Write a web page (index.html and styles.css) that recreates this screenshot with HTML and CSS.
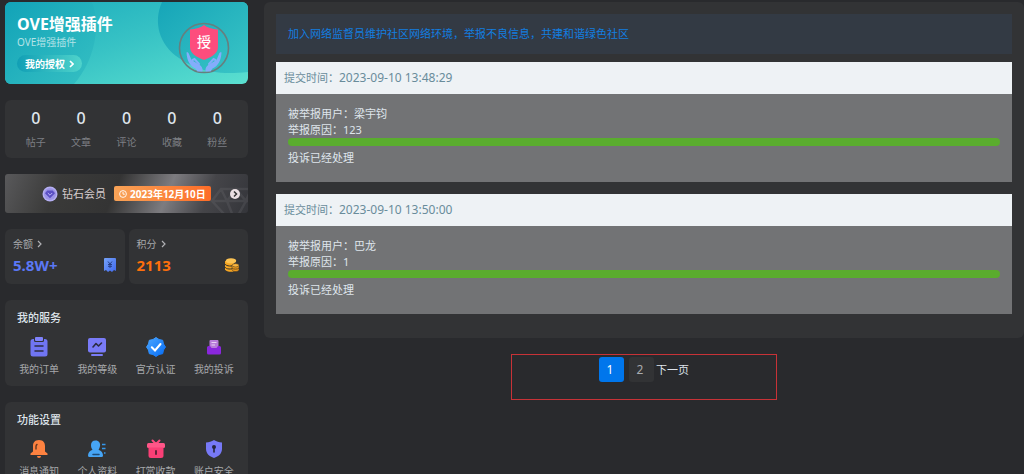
FILE: index.html
```html
<!DOCTYPE html>
<html lang="zh-CN">
<head>
  <meta charset="UTF-8" />
  <meta name="viewport" content="width=device-width,initial-scale=1" />
  <title>我的投诉</title>
  <link rel="stylesheet" href="styles.css">
</head>

<body>
  <div class="page">
    <aside class="sidebar">
      <!-- Plugin banner -->
      <section class="plugin">
        <svg class="plugin-bg" viewBox="0 0 243 82" preserveAspectRatio="none" aria-hidden="true">
          <defs>
            <linearGradient id="bgA" x1="0" y1="0" x2="1" y2="1">
              <stop offset="0" stop-color="#12a3b8"/><stop offset="1" stop-color="#36c0c3"/>
            </linearGradient>
            <linearGradient id="bgB" x1="0" y1="0" x2="1" y2="1">
              <stop offset="0" stop-color="#16a5b8"/><stop offset="1" stop-color="#3ac5c6"/>
            </linearGradient>
            <linearGradient id="bgC" x1="0" y1="0" x2="1" y2="1">
              <stop offset="0" stop-color="#1aabbc"/><stop offset=".5" stop-color="#38c3c5"/><stop offset="1" stop-color="#5be0d0"/>
            </linearGradient>
          </defs>
          <rect width="243" height="82" fill="url(#bgC)"/>
          <path d="M0 0H87C96 24 90 58 69 82H0Z" fill="url(#bgA)"/>
          <path d="M157 0H243V70C206 74 188 66 174 56C154 43 148 20 157 0Z" fill="url(#bgB)"/>
        </svg>
        <div class="plugin-text">
          <h1>OVE增强插件</h1>
          <p>OVE增强插件</p>
          <a class="plugin-btn" href="#">我的授权
            <svg width="5" height="8" viewBox="0 0 5 8"><path d="M1 1l3 3-3 3" fill="none" stroke="#fff" stroke-width="1.6"/></svg>
          </a>
        </div>
        <div class="emblem">
          <svg width="52" height="52" viewBox="0 0 52 52" aria-hidden="true">
            <circle cx="26" cy="26" r="24.5" fill="none" stroke="#667f7f" stroke-width="1.6"/>
            <path d="M26 3C29 5.500 34 7 40 7.500V25C40 31 34 35 26 38C18 35 12 31 12 25V7.500C18 7 23 5.500 26 3Z" fill="#fd4d7d"/>
            <path d="M8.500 30.500C9.500 30 10.500 30.500 11 32L13.500 38L21 42.500C23.500 44 25 46 24.500 49.500H19.500L17.500 46.500C12 44 9 39 8.500 30.500Z" fill="#84adfb"/>
            <path d="M43.500 30.500C42.500 30 41.500 30.500 41 32L38.500 38L31 42.500C28.500 44 27 46 27.500 49.500H32.500L34.500 46.500C40 44 43 39 43.500 30.500Z" fill="#84adfb"/>
            <path d="M14.500 38L16.500 37L21 42M37.500 38L35.500 37L31 42" fill="none" stroke="#84adfb" stroke-width="2" stroke-linecap="round"/>
          </svg>
          <span>授</span>
        </div>
      </section>

      <section class="card stats">
        <div><b>0</b><span>帖子</span></div>
        <div><b>0</b><span>文章</span></div>
        <div><b>0</b><span>评论</span></div>
        <div><b>0</b><span>收藏</span></div>
        <div><b>0</b><span>粉丝</span></div>
      </section>

      <!-- Membership -->
      <a class="vip" href="#">
        <svg class="vip-deco" width="46" height="26" viewBox="0 0 46 26" aria-hidden="true">
          <path d="M11 2H41L52 14L26 40L2 14ZM2 14H46M11 2L17 14L26 2L36 14L41 2M17 14L25 34L36 14" fill="none" stroke="#77777a" stroke-opacity=".22" stroke-width="2.500"/>
        </svg>
        <svg width="16" height="16" viewBox="0 0 16 16" aria-hidden="true">
          <circle cx="8" cy="8" r="7.500" fill="#b5aff2"/>
          <circle cx="8" cy="8" r="6" fill="#9c94e6"/>
          <path d="M5.300 4.500H10.700L13 7.200L8 12.300L3 7.200Z" fill="#5a4fc4"/>
          <path d="M5.800 7L8 9.200L10.200 7" fill="none" stroke="#c8c2ff" stroke-width=".9"/>
        </svg>
        <span class="vip-name">钻石会员</span>
        <span class="vip-date">
          <svg width="8" height="8" viewBox="0 0 8 8" aria-hidden="true"><circle cx="4" cy="4" r="3.400" fill="none" stroke="#fff" stroke-width=".9"/><path d="M4 2V4.200H5.800" fill="none" stroke="#fff" stroke-width=".9"/></svg>
          2023年12月10日
        </span>
        <svg class="vip-go" width="10" height="10" viewBox="0 0 10 10" aria-hidden="true"><circle cx="5" cy="5" r="5" fill="#eadfe2"/><path d="M4 2.500L6.500 5L4 7.500" fill="none" stroke="#333" stroke-width="1.500"/></svg>
      </a>

      <div class="wallet">
        <a class="card wallet-item" href="#">
          <span class="wallet-label">余额
            <svg width="5" height="8" viewBox="0 0 5 8"><path d="M1 1l3 3-3 3" fill="none" stroke="#b0b1b4" stroke-width="1.200"/></svg>
          </span>
          <span class="wallet-row">
            <b class="blue">5.8W+</b>
            <svg width="12" height="14" viewBox="0 0 12 14" aria-hidden="true">
              <defs><linearGradient id="bill" x1="0" y1="0" x2="1" y2="1"><stop offset="0" stop-color="#76a3f8"/><stop offset="1" stop-color="#3f68ee"/></linearGradient></defs>
              <path d="M1 0H11Q12 0 12 1V13L10 12L8 14L6 12.500L4 14L2 12L0 13V1Q0 0 1 0Z" fill="url(#bill)"/>
              <path d="M4 3.500L6 6L8 3.500M6 6V10M4 6.500H8M4 8.300H8" fill="none" stroke="#263f85" stroke-width="1"/>
            </svg>
          </span>
        </a>
        <a class="card wallet-item" href="#">
          <span class="wallet-label">积分
            <svg width="5" height="8" viewBox="0 0 5 8"><path d="M1 1l3 3-3 3" fill="none" stroke="#b0b1b4" stroke-width="1.200"/></svg>
          </span>
          <span class="wallet-row">
            <b class="orange">2113</b>
            <svg width="14" height="14" viewBox="0 0 14 14" aria-hidden="true">
              <path d="M0 3V11.500C1 14 8 14.500 9 13V3Z" fill="#f5a623"/>
              <path d="M0 6C1 8.500 8 8.500 9 7M0 9C1 11.500 7 11.500 8 10" fill="none" stroke="#33302a" stroke-width="1"/>
              <ellipse cx="6" cy="2.800" rx="5.200" ry="2.600" fill="#fcc353"/>
              <path d="M7 7.500V12C8 14 13 14 14 12V7.500Z" fill="#f09a1c" stroke="#33302a" stroke-width=".5"/>
              <ellipse cx="10.500" cy="7.300" rx="3.400" ry="1.700" fill="#fcb53b" stroke="#33302a" stroke-width=".5"/>
              <path d="M7 10C8 11.500 13 11.500 14 10" fill="none" stroke="#54401c" stroke-width=".8"/>
            </svg>
          </span>
        </a>
      </div>

      <section class="card menu">
        <h2>我的服务</h2>
        <nav class="menu-grid">
          <a href="#">
            <svg width="20" height="20" viewBox="0 0 20 20" aria-hidden="true">
              <rect x="1.500" y="2" width="17" height="17.500" rx="2.500" fill="#7075f3"/>
              <rect x="5" y="0" width="10" height="5" rx="1.500" fill="#323335"/>
              <rect x="6" y="0" width="8" height="4" rx="1" fill="#7f82fb"/>
              <path d="M6 9H14M6 14H14" stroke="#2c2d43" stroke-width="1.500" stroke-linecap="round"/>
            </svg>
            <span>我的订单</span>
          </a>
          <a href="#">
            <svg width="20" height="20" viewBox="0 0 20 20" aria-hidden="true">
              <rect x="1" y="1" width="18" height="14.500" rx="2" fill="#797bf8"/>
              <path d="M6 10L9 6.500L11.500 9L14.500 6" fill="none" stroke="#2c2d43" stroke-width="1.600" stroke-linecap="round" stroke-linejoin="round"/>
              <path d="M5 18H15" stroke="#797bf8" stroke-width="2" stroke-linecap="round"/>
            </svg>
            <span>我的等级</span>
          </a>
          <a href="#">
            <svg width="20" height="20" viewBox="0 0 20 20" aria-hidden="true">
              <defs><linearGradient id="ok" x1="0" y1="0" x2="1" y2="1"><stop offset="0" stop-color="#4ba6ff"/><stop offset="1" stop-color="#056cf5"/></linearGradient></defs>
              <path d="M10 .5L13 2.500L16.700 3.300L17.500 7L19.500 10L17.500 13L16.700 16.700L13 17.500L10 19.500L7 17.500L3.300 16.700L2.500 13L.5 10L2.500 7L3.300 3.300L7 2.500Z" fill="url(#ok)" stroke="url(#ok)" stroke-linejoin="round"/>
              <path d="M5.800 10.200L9 13.500L14.500 7" fill="none" stroke="#fff" stroke-width="2" stroke-linecap="round"/>
            </svg>
            <span>官方认证</span>
          </a>
          <a href="#">
            <svg width="20" height="20" viewBox="0 0 20 20" aria-hidden="true">
              <rect x="5.500" y="3" width="9" height="9" rx="1" fill="#b87cda"/>
              <path d="M7.500 5.500H12.500M7.500 8H11" stroke="#e8d0f5" stroke-width="1"/>
              <path d="M4.500 9H6L7.500 11H12.500L14 9H15.500Q17 9 17 10.500V16Q17 17.500 15.500 17.500H4.500Q3 17.500 3 16V10.500Q3 9 4.500 9Z" fill="#8a27dd"/>
            </svg>
            <span>我的投诉</span>
          </a>
        </nav>
      </section>

      <section class="card menu">
        <h2>功能设置</h2>
        <nav class="menu-grid">
          <a href="#">
            <svg width="20" height="20" viewBox="0 0 20 20" aria-hidden="true">
              <path d="M10 1C14.500 1 16 4 16 7V12.500L18.500 14.500V16H1.500V14.500L4 12.500V7C4 4 5.500 1 10 1Z" fill="#fd8240"/>
              <path d="M8 17H12Q12 19 10 19Q8 19 8 17Z" fill="#fd8240"/>
              <path d="M7 10V7.500Q7 6 8 5.500" fill="none" stroke="#633822" stroke-width="1.400" stroke-linecap="round"/>
            </svg>
            <span>消息通知</span>
          </a>
          <a href="#">
            <svg width="20" height="20" viewBox="0 0 20 20" aria-hidden="true">
              <path d="M8.500 1.500C12 1.500 13.500 4 13 7C12.700 9 12 10 11.500 10.800C14.500 12 16 14 16 16.500Q16 18 14.500 18H2.500Q1 18 1 16.500C1 14 2.500 12 5.500 10.800C4.500 9.500 4 8 4 6C4 3.500 5.500 1.500 8.500 1.500Z" fill="#46a5f5"/>
              <path d="M6 15.500H12" stroke="#1d4b78" stroke-width="1.500" stroke-linecap="round"/>
              <path d="M15 5.500H18.500M15 9.500H18.500M17 14H18.500" stroke="#3598ec" stroke-width="1.600"/>
            </svg>
            <span>个人资料</span>
          </a>
          <a href="#">
            <svg width="20" height="20" viewBox="0 0 20 20" aria-hidden="true">
              <path d="M10 5L6.500 1.500M10 5L13.500 1.500" stroke="#fd4b80" stroke-width="2" stroke-linecap="round"/>
              <rect x="1" y="4" width="18" height="5" rx="1.500" fill="#ff5688"/>
              <path d="M2.500 8.500H17.500V16.500Q17.500 19 15 19H5Q2.500 19 2.500 16.500Z" fill="#fa3f76"/>
              <path d="M10 12V15" stroke="#65213a" stroke-width="2" stroke-linecap="round"/>
            </svg>
            <span>打赏收款</span>
          </a>
          <a href="#">
            <svg width="20" height="20" viewBox="0 0 20 20" aria-hidden="true">
              <path d="M10 1C12.500 2.500 15 3.300 18 3.500V10C18 14.500 14.500 17.500 10 19C5.500 17.500 2 14.500 2 10V3.500C5 3.300 7.500 2.500 10 1Z" fill="#7779f6"/>
              <circle cx="10" cy="8" r="2" fill="#26263b"/>
              <path d="M10 8V13" stroke="#26263b" stroke-width="1.600" stroke-linecap="round"/>
            </svg>
            <span>账户安全</span>
          </a>
        </nav>
      </section>
    </aside>

    <main class="content">
      <section class="card panel">
        <p class="notice">加入网络监督员维护社区网络环境，举报不良信息，共建和谐绿色社区</p>

        <article class="report">
          <header>提交时间：<time>2023-09-10 13:48:29</time></header>
          <div class="report-body">
            <p>被举报用户：梁宇钧</p>
            <p>举报原因：123</p>
            <div class="bar"></div>
            <p>投诉已经处理</p>
          </div>
        </article>

        <article class="report">
          <header>提交时间：<time>2023-09-10 13:50:00</time></header>
          <div class="report-body">
            <p>被举报用户：巴龙</p>
            <p>举报原因：1</p>
            <div class="bar"></div>
            <p>投诉已经处理</p>
          </div>
        </article>
      </section>

      <nav class="pager">
        <a class="pager-num active" href="#">1</a>
        <a class="pager-num" href="#">2</a>
        <a class="pager-next" href="#">下一页</a>
      </nav>
    </main>
  </div>
</body>
</html>
```
FILE: styles.css
```css
:root{
  --bg:#292a2d;
  --card:#323335;
  --text:#dfe5ec;
  --muted:#7d7f84;
  --soft:#a6a8ab;
  --blue:#0076ec;
  --radius:6px;
}
*{box-sizing:border-box;}
body{
  margin:0;
  font-family:"Noto Sans","Noto Sans CJK SC",sans-serif;
  font-size:11px;
  line-height:16px;
  background:var(--bg);
  color:var(--text);
}
h1,h2,p{margin:0;}
a{
  color:inherit;
  text-decoration:none;
}
svg{
  display:block;
  flex:none;
}
.page{
  display:flex;
  align-items:flex-start;
  gap:16px;
  height:100vh;
  overflow:hidden;
  padding:2px 0 0 5px;
}
.sidebar{
  flex:none;
  width:243px;
  display:flex;
  flex-direction:column;
  gap:16px;
}
.content{
  flex:1;
  min-width:0;
}
.card{
  background:var(--card);
  border-radius:var(--radius);
}

/* Plugin banner */
.plugin{
  position:relative;
  display:flex;
  justify-content:space-between;
  height:82px;
  padding:12px 18px 0 12px;
  border-radius:var(--radius);
  overflow:hidden;
  color:#fff;
}
.plugin-bg{
  position:absolute;
  inset:0;
  width:100%;
  height:100%;
}
.plugin-text{
  position:relative;
}
.plugin h1{
  font-size:16px;
  line-height:20px;
  font-weight:700;
}
.plugin p{
  font-size:10px;
  line-height:16px;
  color:#b4e3e7;
}
.plugin-btn{
  display:inline-flex;
  align-items:center;
  gap:4px;
  height:17px;
  margin-top:5px;
  padding:0 8px;
  border-radius:9px;
  background:linear-gradient(90deg,#119fb5,#4fd3cb);
  font-size:10px;
  font-weight:700;
}
.emblem{
  position:relative;
  margin-top:8px;
  width:52px;
  height:52px;
}
.emblem span{
  position:absolute;
  top:10px;
  left:0;
  width:100%;
  text-align:center;
  font-size:14px;
  line-height:20px;
  font-weight:500;
}

.stats{
  display:flex;
  padding:8px 8px 7px;
}
.stats div{
  flex:1;
  display:flex;
  flex-direction:column;
  align-items:center;
  gap:6px;
}
.stats b{
  font-size:16px;
  line-height:20px;
  font-weight:500;
}
.stats span{
  font-size:10px;
  line-height:17px;
  color:var(--muted);
}

/* Membership */
.vip{
  position:relative;
  display:flex;
  align-items:center;
  height:39px;
  padding:0 8px 0 37px;
  border-radius:3px;
  overflow:hidden;
  background:linear-gradient(112deg,#59595b 0%,#3a3a39 22%,#343434 45%,#7d7c80 66%,#454549 82%,#34353a 100%);
}
.vip-deco{
  position:absolute;
  right:-8px;
  bottom:0;
}
.vip-name{
  margin-left:4px;
  color:#d5cccd;
}
.vip-date{
  display:flex;
  align-items:center;
  gap:3px;
  height:15px;
  margin-left:8px;
  padding:0 5px;
  border-radius:2px;
  background:linear-gradient(90deg,#f8a357,#fd6c27);
  color:#fff;
  font-size:10px;
  font-weight:700;
  white-space:nowrap;
}
.vip-go{
  position:relative;
  margin-left:auto;
}

.wallet{
  display:flex;
  gap:4px;
}
.wallet-item{
  flex:1;
  padding:6px 9px 7px 8px;
}
.wallet-label{
  display:flex;
  align-items:center;
  gap:4px;
  font-size:10px;
  line-height:18px;
  color:var(--soft);
}
.wallet-row{
  display:flex;
  align-items:center;
  justify-content:space-between;
}
.wallet-row b{
  font-size:15px;
  line-height:24px;
}
.blue{color:#5b78f5;}
.orange{color:#fd6f0c;}

.menu{
  padding:9px 5px;
}
.menu h2{
  padding-left:7px;
  font-size:11px;
  line-height:18px;
  font-weight:500;
}
.menu-grid{
  display:flex;
  margin-top:10px;
}
.menu-grid a{
  flex:1;
  display:flex;
  flex-direction:column;
  align-items:center;
  gap:4px;
  font-size:10px;
  line-height:16px;
  color:var(--soft);
}

/* Reports */
.panel{
  padding:12px;
}
.notice{
  padding:12px;
  margin-bottom:8px;
  background:#333a44;
  color:#127ee0;
}
.report{
  margin-bottom:12px;
}
.report header{
  padding:8px;
  background:#eef2f5;
  color:#698c9b;
}
.report time{
  font-size:12px;
}
.report-body{
  padding:12px 12px 16px;
  background:#727375;
}
.bar{
  height:8px;
  margin-bottom:4px;
  border-radius:4px;
  background:#5aac2e;
}

.pager{
  display:flex;
  justify-content:center;
  width:35%;
  height:46px;
  margin:16px auto 0;
  padding-top:2px;
  border:1px solid #c73237;
}
.pager-num{
  width:25px;
  height:25px;
  margin-right:5px;
  padding-right:3px;
  border-radius:3px;
  background:var(--card);
  color:#a9abaf;
  font-size:12px;
  line-height:25px;
  text-align:center;
}
.pager-num.active{
  background:var(--blue);
  color:#fff;
}
.pager-next{
  margin-left:-3px;
  line-height:25px;
}
```
